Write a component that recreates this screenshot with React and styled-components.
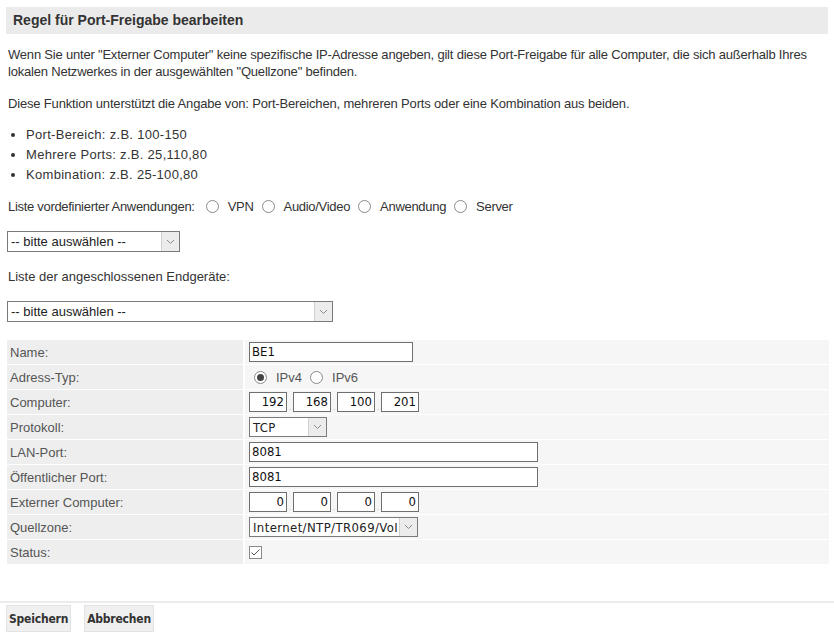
import React from "react";
import styled, { createGlobalStyle } from "styled-components";

const Global = createGlobalStyle`
  html, body { margin: 0; padding: 0; background: #fff; }
  body { font-family: "Liberation Sans", Arial, sans-serif; font-size: 13px; color: #333; }
`;

const Page = styled.div`
  padding: 7px 6px 0 6px;
  width: 834px;
  box-sizing: border-box;
`;

const Header = styled.div`
  height: 27px;
  line-height: 27px;
  background: #ebebeb;
  padding-left: 7px;
  font-weight: bold;
  font-size: 14px;
  color: #333;
`;

const Para = styled.p`
  margin: ${(p) => p.$mt || 0}px 0 0 2px;
  line-height: 17px;
  color: #333;
  letter-spacing: ${(p) => p.$ls ?? -0.17}px;
`;

const List = styled.ul`
  margin: 13px 0 0 0;
  padding-left: 20px;
  list-style: disc;
  letter-spacing: 0.3px;
  li { line-height: 20px; }
`;

const RadioLine = styled.div`
  display: flex;
  align-items: center;
  height: 20px;
  margin: ${(p) => p.$mt || 0}px 0 0 2px;
  letter-spacing: -0.3px;
`;

const Radio = styled.span`
  display: inline-block;
  box-sizing: border-box;
  width: 13px;
  height: 13px;
  border-radius: 50%;
  border: 1px solid #8a8a8a;
  background: #fff;
  margin: 0 9px 0 ${(p) => p.$ml ?? 8}px;
  position: relative;
  flex-shrink: 0;
  &::after {
    content: "";
    display: ${(p) => (p.$checked ? "block" : "none")};
    position: absolute;
    left: 2px; top: 2px;
    width: 7px; height: 7px;
    border-radius: 50%;
    background: #444;
  }
`;

const Select = styled.div`
  box-sizing: border-box;
  width: ${(p) => p.$w}px;
  height: ${(p) => p.$h || 20}px;
  border: 1px solid #7a7a7a;
  background: #fff;
  display: flex;
  align-items: stretch;
  margin: ${(p) => p.$mt || 0}px 0 0 ${(p) => p.$ml || 0}px;
  font-family: ${(p) => (p.$tahoma ? '"DejaVu Sans Condensed", "DejaVu Sans", sans-serif' : '"Liberation Sans", Arial, sans-serif')};
  letter-spacing: ${(p) => (p.$tahoma ? 0.4 : 0)}px;
  font-size: 13px;
  color: #222;
`;

const SelectText = styled.span`
  flex: 1;
  padding-left: 3px;
  display: flex;
  align-items: center;
  white-space: nowrap;
  overflow: hidden;
`;

const SelectArrow = styled.span`
  width: 17px;
  flex-shrink: 0;
  background: #ececec;
  border-left: 1px solid #d0d0d0;
  display: flex;
  align-items: center;
  justify-content: center;
`;

const Chevron = () => (
  <svg width="9" height="6" viewBox="0 0 9 6">
    <path d="M1 1 L4.5 4.5 L8 1" fill="none" stroke="#8a8a8a" strokeWidth="1" />
  </svg>
);

const FakeSelect = ({ w, h, mt, ml, tahoma, children }) => (
  <Select $w={w} $h={h} $mt={mt} $ml={ml} $tahoma={tahoma}>
    <SelectText>{children}</SelectText>
    <SelectArrow><Chevron /></SelectArrow>
  </Select>
);

const Table = styled.div`
  margin: 18px 0 0 1px;
  display: grid;
  grid-template-columns: 236px 1fr;
  grid-auto-rows: 24px;
  gap: 1px 2px;
  width: 822px;
`;

const Label = styled.div`
  background: #eeeeee;
  color: #555;
  padding-left: 3px;
  display: flex;
  align-items: center;
`;

const Value = styled.div`
  background: #f6f6f6;
  padding-left: 4px;
  display: flex;
  align-items: center;
`;

const TextInput = styled.div`
  box-sizing: border-box;
  width: ${(p) => p.$w}px;
  height: 20px;
  border: 1px solid #6f6f6f;
  background: #fff;
  font-family: "DejaVu Sans Condensed", "DejaVu Sans", sans-serif;
  font-size: 13px;
  color: #111;
  line-height: 18px;
  padding: 0 2px;
  text-align: ${(p) => (p.$right ? "right" : "left")};
`;

const Dot = styled.span`
  width: 6px;
  text-align: center;
  font-size: 9px;
  color: #bbb;
  align-self: flex-end;
  line-height: 14px;
`;

const CheckBox = styled.span`
  box-sizing: border-box;
  width: 13px;
  height: 13px;
  border: 1px solid #8a8a8a;
  background: #fff;
  display: flex;
  align-items: center;
  justify-content: center;
`;

const RadioLabel = styled.span`
  color: #555;
`;

const Footer = styled.div`
  margin-top: 37px;
  border-top: 2px solid #ececec;
  padding: 2px 6px 0;
  display: flex;
  gap: 13px;
`;

const Button = styled.button`
  height: 27px;
  padding: 0 2px;
  background: #f0f0f0;
  border: 1px solid #e2e2e2;
  font-family: "DejaVu Sans Condensed", "DejaVu Sans", sans-serif;
  font-weight: bold;
  font-size: 12px;
  color: #333;
  letter-spacing: -0.2px;
`;

const Ip = ({ values }) => (
  <>
    {values.map((v, i) => (
      <React.Fragment key={i}>
        {i > 0 && <Dot>.</Dot>}
        <TextInput $w={38} $right>{v}</TextInput>
      </React.Fragment>
    ))}
  </>
);

export default function App() {
  return (
    <>
      <Global />
      <Page>
        <Header>Regel für Port-Freigabe bearbeiten</Header>
        <Para $mt={12} $ls={-0.2}>
          Wenn Sie unter "Externer Computer" keine spezifische IP-Adresse angeben, gilt diese Port-Freigabe für alle Computer, die sich außerhalb Ihres lokalen Netzwerkes in der ausgewählten "Quellzone" befinden.
        </Para>
        <Para $mt={15}>
          Diese Funktion unterstützt die Angabe von: Port-Bereichen, mehreren Ports oder eine Kombination aus beiden.
        </Para>
        <List>
          <li>Port-Bereich: z.B. 100-150</li>
          <li>Mehrere Ports: z.B. 25,110,80</li>
          <li>Kombination: z.B. 25-100,80</li>
        </List>
        <RadioLine $mt={11}>
          Liste vordefinierter Anwendungen:
          <Radio $ml={11} /> VPN
          <Radio /> Audio/Video
          <Radio /> Anwendung
          <Radio /> Server
        </RadioLine>
        <FakeSelect w={173} h={21} mt={15} ml={1}>-- bitte auswählen --</FakeSelect>
        <Para $mt={16} $ls={0}>Liste der angeschlossenen Endgeräte:</Para>
        <FakeSelect w={326} h={21} mt={16} ml={1}>-- bitte auswählen --</FakeSelect>
        <Table>
          <Label>Name:</Label>
          <Value><TextInput $w={164}>BE1</TextInput></Value>
          <Label>Adress-Typ:</Label>
          <Value>
            <Radio $checked $ml={5} /><RadioLabel>IPv4</RadioLabel>
            <Radio /><RadioLabel>IPv6</RadioLabel>
          </Value>
          <Label>Computer:</Label>
          <Value><Ip values={["192", "168", "100", "201"]} /></Value>
          <Label>Protokoll:</Label>
          <Value><FakeSelect w={78} tahoma>TCP</FakeSelect></Value>
          <Label>LAN-Port:</Label>
          <Value><TextInput $w={289}>8081</TextInput></Value>
          <Label>Öffentlicher Port:</Label>
          <Value><TextInput $w={289}>8081</TextInput></Value>
          <Label>Externer Computer:</Label>
          <Value><Ip values={["0", "0", "0", "0"]} /></Value>
          <Label>Quellzone:</Label>
          <Value><FakeSelect w={169} tahoma>Internet/NTP/TR069/VoIP</FakeSelect></Value>
          <Label>Status:</Label>
          <Value>
            <CheckBox>
              <svg width="11" height="9" viewBox="0 0 11 9">
                <path d="M1.5 4.5 L4 7 L9.5 1.5" fill="none" stroke="#555" strokeWidth="1" />
              </svg>
            </CheckBox>
          </Value>
        </Table>
      </Page>
      <Footer>
        <Button>Speichern</Button>
        <Button>Abbrechen</Button>
      </Footer>
    </>
  );
}
